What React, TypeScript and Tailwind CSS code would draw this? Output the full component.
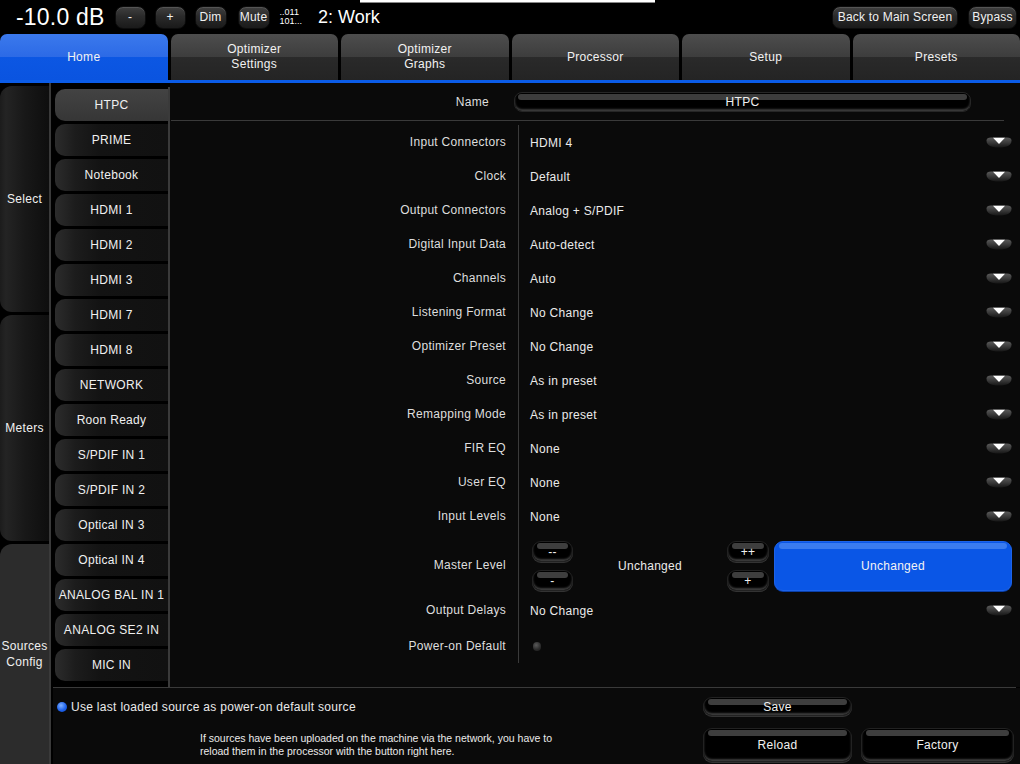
import React from "react";

const sources = [
  "HTPC",
  "PRIME",
  "Notebook",
  "HDMI 1",
  "HDMI 2",
  "HDMI 3",
  "HDMI 7",
  "HDMI 8",
  "NETWORK",
  "Roon Ready",
  "S/PDIF IN 1",
  "S/PDIF IN 2",
  "Optical IN 3",
  "Optical IN 4",
  "ANALOG BAL IN 1",
  "ANALOG SE2 IN",
  "MIC IN",
];

const rows: [string, string][] = [
  ["Input Connectors", "HDMI 4"],
  ["Clock", "Default"],
  ["Output Connectors", "Analog + S/PDIF"],
  ["Digital Input Data", "Auto-detect"],
  ["Channels", "Auto"],
  ["Listening Format", "No Change"],
  ["Optimizer Preset", "No Change"],
  ["Source", "As in preset"],
  ["Remapping Mode", "As in preset"],
  ["FIR EQ", "None"],
  ["User EQ", "None"],
  ["Input Levels", "None"],
];

const tabs: { label: string[]; active?: boolean }[] = [
  { label: ["Home"], active: true },
  { label: ["Optimizer", "Settings"] },
  { label: ["Optimizer", "Graphs"] },
  { label: ["Processor"] },
  { label: ["Setup"] },
  { label: ["Presets"] },
];

function TopButton({ children, w }: { children: React.ReactNode; w: string }) {
  return (
    <div
      className={`${w} h-[23px] rounded-[8px] border border-[#0c0c0c] bg-[linear-gradient(to_bottom,#404040_0%,#2a2a2a_45%,#1a1a1a_100%)] shadow-[inset_0_1px_0_#555] flex items-center justify-center text-[12px] text-[#f0f0f0] tracking-[0.2px] leading-none`}
    >
      {children}
    </div>
  );
}

function GlossyButton({
  children,
  className,
}: {
  children?: React.ReactNode;
  className: string;
}) {
  return (
    <div
      className={`relative rounded-[9px] bg-black border border-[#222] shadow-[inset_0_-2px_2px_#3c3c3c,0_1px_0_#333] flex items-center justify-center text-[#f0f0f0] text-[12px] tracking-[0.3px] leading-none ${className}`}
    >
      <span className="absolute left-[4px] right-[4px] top-[1px] h-[6px] rounded-[4px] bg-[#3e3e3e]" />
      <span className="relative">{children}</span>
    </div>
  );
}

function DropArrow() {
  return (
    <svg width="26" height="11" viewBox="0 0 26 11">
      <defs>
        <linearGradient id="pillg" x1="0" y1="0" x2="0" y2="1">
          <stop offset="0" stopColor="#5a5a5a" />
          <stop offset="0.5" stopColor="#3a3a3a" />
          <stop offset="1" stopColor="#161616" />
        </linearGradient>
      </defs>
      <path
        d="M0.5 3.5 Q0.5 0.5 5 0.5 L21 0.5 Q25.5 0.5 25.5 3.5 Q25.5 10.5 13 10.5 Q0.5 10.5 0.5 3.5 Z"
        fill="url(#pillg)"
      />
      <path d="M7 0.8 L19 0.8 L13 7 Z" fill="#ffffff" />
    </svg>
  );
}

export default function App() {
  return (
    <div className="relative w-[1020px] h-[764px] overflow-hidden bg-black text-white font-['Liberation_Sans',Arial,sans-serif]">
      {/* thin white strip at top */}
      <div className="absolute left-[360px] top-0 w-[295px] h-[3px] bg-white border-b border-[#888]" />

      {/* Top bar */}
      <div className="h-[34px] flex items-center">
        <div className="pl-[16px] text-[23px] leading-none text-white tracking-[0.2px]">-10.0 dB</div>
        <div className="ml-[10px] flex items-center gap-[9px]">
          <TopButton w="w-[31px]">-</TopButton>
          <TopButton w="w-[31px]">+</TopButton>
        </div>
        <div className="ml-[9px]">
          <TopButton w="w-[32px]">Dim</TopButton>
        </div>
        <div className="ml-[11px]">
          <TopButton w="w-[32px]">Mute</TopButton>
        </div>
        <div className="ml-[10px] flex flex-col text-[9px] leading-[9px] text-white">
          <span>..011</span>
          <span>101...</span>
        </div>
        <div className="ml-[16px] text-[18px] leading-none text-white">2: Work</div>
        <div className="flex-1" />
        <div className="flex items-center gap-[10px] pr-[3px]">
          <TopButton w="w-[126px]">Back to Main Screen</TopButton>
          <TopButton w="w-[49px]">Bypass</TopButton>
        </div>
      </div>

      {/* Tabs */}
      <div className="h-[46px] flex gap-[3px]">
        {tabs.map((t, i) => (
          <div
            key={i}
            className={`flex-1 rounded-t-[7px] flex flex-col items-center justify-center text-[12px] leading-[15px] tracking-[0.3px] text-[#f2f2f2] ${
              t.active
                ? "bg-[linear-gradient(to_bottom,#3b79ec_0%,#2c6ae6_50%,#0c57e3_50%,#0a54e0_100%)]"
                : "bg-[linear-gradient(to_bottom,#4d4d4d_0%,#3d3d3d_50%,#2a2a2a_50%,#242424_100%)]"
            }`}
          >
            {t.label.map((l) => (
              <span key={l}>{l}</span>
            ))}
          </div>
        ))}
      </div>
      <div className="h-[3px] bg-[#0b5ce8]" />

      {/* Body */}
      <div className="flex h-[681px]">
        {/* Left column */}
        <div className="w-[49px] flex flex-col gap-[3px] pt-[3px]">
          <div className="h-[226px] rounded-l-[12px] bg-[linear-gradient(to_right,#1c1c1c_0%,#242424_12%,#181818_50%,#0e0e0e_100%)] flex items-center justify-center text-[12px] tracking-[0.3px] text-[#f0f0f0]">
            Select
          </div>
          <div className="h-[226px] rounded-l-[12px] bg-[linear-gradient(to_right,#1c1c1c_0%,#242424_12%,#181818_50%,#0e0e0e_100%)] flex items-center justify-center text-[12px] tracking-[0.3px] text-[#f0f0f0]">
            Meters
          </div>
          <div className="flex-1 rounded-tl-[12px] bg-[#2c2c2c] flex flex-col items-center justify-center text-[12px] tracking-[0.3px] leading-[16px] text-[#f0f0f0]">
            <span>Sources</span>
            <span>Config</span>
          </div>
        </div>
        <div className="w-[2px] bg-[#3a3a3a]" />

        {/* Right part */}
        <div className="flex-1 flex flex-col pl-[2px]">
          <div className="h-[604px] flex">
            {/* Source list */}
            <div className="w-[115px] pl-[2px] pt-[6px] flex flex-col gap-[3px] bg-black">
              {sources.map((s, i) => (
                <div
                  key={s}
                  className={`h-[32px] rounded-l-[10px] flex items-center justify-center text-[12px] tracking-[0.3px] text-[#f0f0f0] whitespace-nowrap ${
                    i === 0
                      ? "bg-[linear-gradient(to_bottom,#434343,#363636)]"
                      : "bg-[linear-gradient(to_right,#2c2c2c_0%,#1c1c1c_18%,#131313_40%,#111111_100%)]"
                  }`}
                >
                  {s}
                </div>
              ))}
            </div>
            <div className="w-[2px] mt-[4px] bg-[#3a3a3a]" />

            {/* Form */}
            <div className="flex-1 bg-[#0a0a0a] flex flex-col pt-[9px]">
              <div className="h-[20px] flex items-center">
                <div className="w-[319px] text-right text-[12px] tracking-[0.3px] text-[#dedede]">Name</div>
                <div className="ml-[25px] w-[457px] h-[20px] relative rounded-[8px] bg-black border border-[#262626] shadow-[inset_0_-2px_2px_#3a3a3a] flex items-center justify-center text-[12px] tracking-[0.3px] text-[#f0f0f0]">
                  <span className="absolute left-[3px] right-[3px] top-[1px] h-[6px] rounded-[4px] bg-[#3c3c3c]" />
                  <span className="relative">HTPC</span>
                </div>
              </div>
              <div className="mt-[8px] ml-[1px] mr-[16px] h-[1px] bg-[#3a3a3a]" />

              <div className="pt-[4px] flex flex-col">
                {rows.map(([l, v]) => (
                  <div key={l} className="h-[34px] flex">
                    <div className="w-[348px] pr-[12px] flex items-center justify-end text-[12px] tracking-[0.3px] text-[#dedede]">
                      {l}
                    </div>
                    <div className="flex-1 border-l border-[#3a3a3a] pl-[11px] pr-[8px] flex items-center justify-between text-[12px] tracking-[0.3px] text-[#eaeaea]">
                      <span className="pt-[1px]">{v}</span>
                      <DropArrow />
                    </div>
                  </div>
                ))}

                {/* Master Level */}
                <div className="h-[60px] flex">
                  <div className="w-[348px] pr-[12px] pt-[4px] flex items-center justify-end text-[12px] tracking-[0.3px] text-[#dedede]">
                    Master Level
                  </div>
                  <div className="flex-1 border-l border-[#3a3a3a] pl-[13px] pr-[8px] pt-[8px] pb-[2px] flex items-stretch">
                    <div className="w-[41px] flex flex-col justify-between">
                      <GlossyButton className="h-[21px] text-[11px]">--</GlossyButton>
                      <GlossyButton className="h-[21px] text-[11px]">-</GlossyButton>
                    </div>
                    <div className="flex-1 flex items-center justify-center text-[12px] tracking-[0.3px] text-[#eaeaea]">
                      Unchanged
                    </div>
                    <div className="w-[42px] flex flex-col justify-between">
                      <GlossyButton className="h-[21px] text-[11px]">++</GlossyButton>
                      <GlossyButton className="h-[21px] text-[11px]">+</GlossyButton>
                    </div>
                    <div className="ml-[5px] w-[238px] relative rounded-[9px] bg-[#0a56e6] border border-[#1d63e9] shadow-[0_1px_0_#0a3fa8] flex items-center justify-center text-[12px] tracking-[0.3px] text-[#f4f4f4]">
                      <span className="absolute left-[4px] right-[4px] top-[1px] h-[6px] rounded-[4px] bg-[#3a7bef]" />
                      <span className="relative">Unchanged</span>
                    </div>
                  </div>
                </div>

                {/* Output Delays */}
                <div className="h-[34px] flex">
                  <div className="w-[348px] pr-[12px] flex items-center justify-end text-[12px] tracking-[0.3px] text-[#dedede]">
                    Output Delays
                  </div>
                  <div className="flex-1 border-l border-[#3a3a3a] pl-[11px] pr-[8px] flex items-center justify-between text-[12px] tracking-[0.3px] text-[#eaeaea]">
                    <span className="pt-[1px]">No Change</span>
                    <DropArrow />
                  </div>
                </div>

                {/* Power-on Default */}
                <div className="h-[36px] flex pt-[2px]">
                  <div className="w-[348px] pr-[12px] flex items-center justify-end text-[12px] tracking-[0.3px] text-[#dedede]">
                    Power-on Default
                  </div>
                  <div className="flex-1 border-l border-[#3a3a3a] -mt-[2px] pt-[2px] pl-[14px] flex items-center">
                    <div className="w-[8px] h-[9px] rounded-full bg-[radial-gradient(circle_at_40%_35%,#5a5a5a,#2a2a2a_60%,#1a1a1a)]" />
                  </div>
                </div>
              </div>
            </div>
          </div>

          <div className="h-[1px] mr-[4px] bg-[#3a3a3a]" />

          {/* Footer */}
          <div className="flex-1 bg-[#0a0a0a] grid grid-cols-[1fr_149px_153px] gap-x-[9px] pr-[6px] grid-rows-[19px_34px] pt-[9px] gap-y-[12px]">
            <div className="flex items-center pl-[4px]">
              <div className="w-[10px] h-[10px] rounded-full bg-[radial-gradient(circle_at_40%_35%,#7fb0ff,#1f62ea_55%,#0b47c8)]" />
              <span className="ml-[4px] text-[12px] text-[#eaeaea] tracking-[0.3px]">
                Use last loaded source as power-on default source
              </span>
            </div>
            <GlossyButton className="h-[19px]">Save</GlossyButton>
            <div />
            <div className="pl-[147px] pt-[4px] text-[10.5px] leading-[13px] text-[#eaeaea]">
              <div>If sources have been uploaded on the machine via the network, you have to</div>
              <div>reload them in the processor with the button right here.</div>
            </div>
            <GlossyButton className="h-[34px]">Reload</GlossyButton>
            <GlossyButton className="h-[34px]">Factory</GlossyButton>
          </div>
        </div>
      </div>
    </div>
  );
}
